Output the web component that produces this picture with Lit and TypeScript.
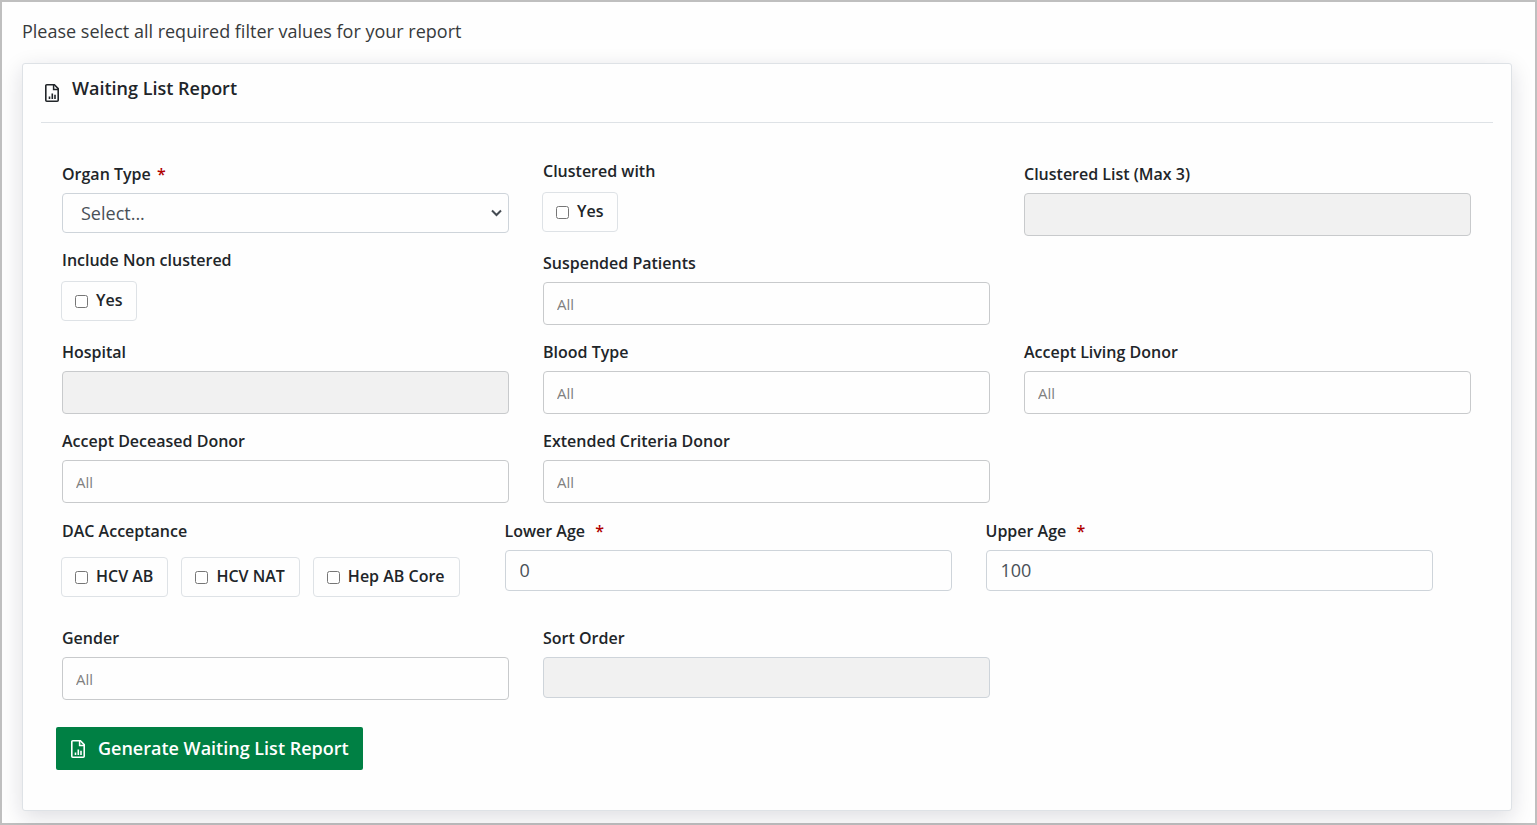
import { LitElement, html, css, svg, nothing } from "lit";
import { customElement } from "lit/decorators.js";

const reportIcon = html`<svg class="icon" viewBox="0 0 14 18" aria-hidden="true">
  ${svg`<path d="M1.8 0.8H9.4L13.2 4.6V16.2a1 1 0 0 1-1 1H1.8a1 1 0 0 1-1-1V1.8a1 1 0 0 1 1-1z" fill="none" stroke="currentColor" stroke-width="1.6"/>
  <path d="M8.6 1v4.4h4.4" fill="none" stroke="currentColor" stroke-width="1.5"/>
  <path d="M4.5 15v-2.6M7.3 15V9.4M10 15v-4.2" fill="none" stroke="currentColor" stroke-width="1.6"/>`}
</svg>`;

@customElement("app-root")
export class AppRoot extends LitElement {
  static styles = css`
    :host {
      display: block;
      box-sizing: border-box;
      min-height: 100vh;
      padding: 16px 23px 12px 20px;
      border: 2px solid #bfbfbf;
      background: #fefefe;
      color: #212529;
      font-family: "Open Sans", sans-serif;
      font-size: 16px;
      line-height: 24px;
    }
    * { box-sizing: border-box; }
    .intro { margin: 0 0 18px; font-size: 18px; line-height: 27px; color: #373a3c; }
    .card {
      padding: 0 18px 40px;
      border: 1px solid #dee2e6;
      border-radius: 3px;
      background: #fefefe;
      box-shadow: 0 6px 22px rgba(20, 20, 50, 0.14);
    }
    .head {
      display: flex;
      align-items: center;
      gap: 13px;
      height: 59px;
      padding: 0 4px;
      border-bottom: 1px solid #dee2e6;
    }
    .title { margin: 0 0 10px; font-size: 18px; line-height: 27px; font-weight: 600; }
    .icon { width: 14px; height: 18px; }
    form { padding: 39px 22px 0 21px; }
    .grid {
      display: grid;
      grid-template-columns: repeat(3, minmax(0, 1fr));
      column-gap: 34px;
      row-gap: 15px;
    }
    .ages { display: flex; gap: 34px; margin: 16px 0 29px; }
    .ages .field { flex: 0 0 calc((100% - 68px) / 3); }
    .field { display: flex; flex-direction: column; gap: 7px; min-width: 0; }
    .group { margin: 0; padding: 0; border: 0; min-width: 0; }
    .grid .group { margin-top: -3px; }
    .label { font-weight: 600; padding: 0; display: block; float: left; width: 100%; }
    .field .label { float: none; }
    .req { color: #b00000; margin-left: 2px; }
    .req.wide { margin-left: 6px; }
    .control {
      width: 100%;
      height: 43px;
      margin: 0;
      padding: 0 13px;
      border: 1px solid #c8cacc;
      border-radius: 4px;
      background: #fefefe;
      color: #495057;
      font: 15px/22px "Open Sans", sans-serif;
    }
    .control::placeholder { color: #808080; opacity: 1; }
    .control:disabled { background: #f1f1f1; }
    .text { height: 41px; padding: 0 14px 2px; border-color: #ced4da; font-size: 18px; }
    .picker { position: relative; display: block; }
    select.control { height: 40px; padding: 0 18px; border-color: #ced4da; font-size: 18px; appearance: none; }
    .chevron { position: absolute; right: 7px; top: 16px; width: 11px; height: 8px; pointer-events: none; color: #444b52; }
    .chips { display: flex; gap: 13px; margin: 0 11px 0 -1px; padding-top: 9px; clear: both; }
    .ages .chips { padding-top: 14px; }
    .chip {
      display: flex;
      align-items: center;
      gap: 8px;
      height: 40px;
      padding: 0 14px 2px 13px;
      border: 1px solid #dee2e6;
      border-radius: 4px;
      font-weight: 600;
      white-space: nowrap;
    }
    .chip input { width: 13px; height: 13px; margin: 2px 0 0; }
    .submit {
      display: flex;
      align-items: center;
      gap: 13px;
      height: 43px;
      margin: 27px 0 0 -6px;
      padding: 0 14px 0 15px;
      border: 0;
      border-radius: 2px;
      background: #008044;
      color: #fff;
      font: 600 18px/27px "Open Sans", sans-serif;
    }
  `;

  private input(id: string, label: string, placeholder = "", disabled = false) {
    return html`<div class="field">
      <label class="label" for=${id}>${label}</label>
      <input class="control" id=${id} type="text" placeholder=${placeholder || nothing} ?disabled=${disabled} />
    </div>`;
  }

  private age(id: string, label: string, value: string) {
    return html`<div class="field">
      <label class="label" for=${id}>${label} <span class="req wide">*</span></label>
      <input class="control text" id=${id} type="text" inputmode="numeric" .value=${value} />
    </div>`;
  }

  private checks(legend: string, options: string[]) {
    return html`<fieldset class="group">
      <legend class="label">${legend}</legend>
      <div class="chips">
        ${options.map((o) => html`<label class="chip"><input type="checkbox" />${o}</label>`)}
      </div>
    </fieldset>`;
  }

  render() {
    return html`
      <p class="intro">Please select all required filter values for your report</p>
      <section class="card">
        <header class="head">${reportIcon}<h1 class="title">Waiting List Report</h1></header>
        <form @submit=${(e: Event) => e.preventDefault()}>
          <div class="grid">
            <div class="field">
              <label class="label" for="organ">Organ Type <span class="req">*</span></label>
              <span class="picker">
                <select class="control" id="organ"><option>Select...</option></select>
                <svg class="chevron" viewBox="0 0 11 8" aria-hidden="true"><path d="M1 1.5l4.5 4.5L10 1.5" fill="none" stroke="currentColor" stroke-width="2" /></svg>
              </span>
            </div>
            ${this.checks("Clustered with", ["Yes"])}
            ${this.input("clustered-list", "Clustered List (Max 3)", "", true)}
            ${this.checks("Include Non clustered", ["Yes"])}
            ${this.input("suspended", "Suspended Patients", "All")}
            <div></div>
            ${this.input("hospital", "Hospital", "", true)}
            ${this.input("blood", "Blood Type", "All")}
            ${this.input("living", "Accept Living Donor", "All")}
            ${this.input("deceased", "Accept Deceased Donor", "All")}
            ${this.input("extended", "Extended Criteria Donor", "All")}
          </div>
          <div class="ages">
            ${this.checks("DAC Acceptance", ["HCV AB", "HCV NAT", "Hep AB Core"])}
            ${this.age("lower-age", "Lower Age", "0")}
            ${this.age("upper-age", "Upper Age", "100")}
          </div>
          <div class="grid">
            ${this.input("gender", "Gender", "All")}
            <div class="field">
              <label class="label" for="sort">Sort Order</label>
              <input class="control text" id="sort" type="text" disabled />
            </div>
          </div>
          <button class="submit" type="submit">${reportIcon}Generate Waiting List Report</button>
        </form>
      </section>
    `;
  }
}
